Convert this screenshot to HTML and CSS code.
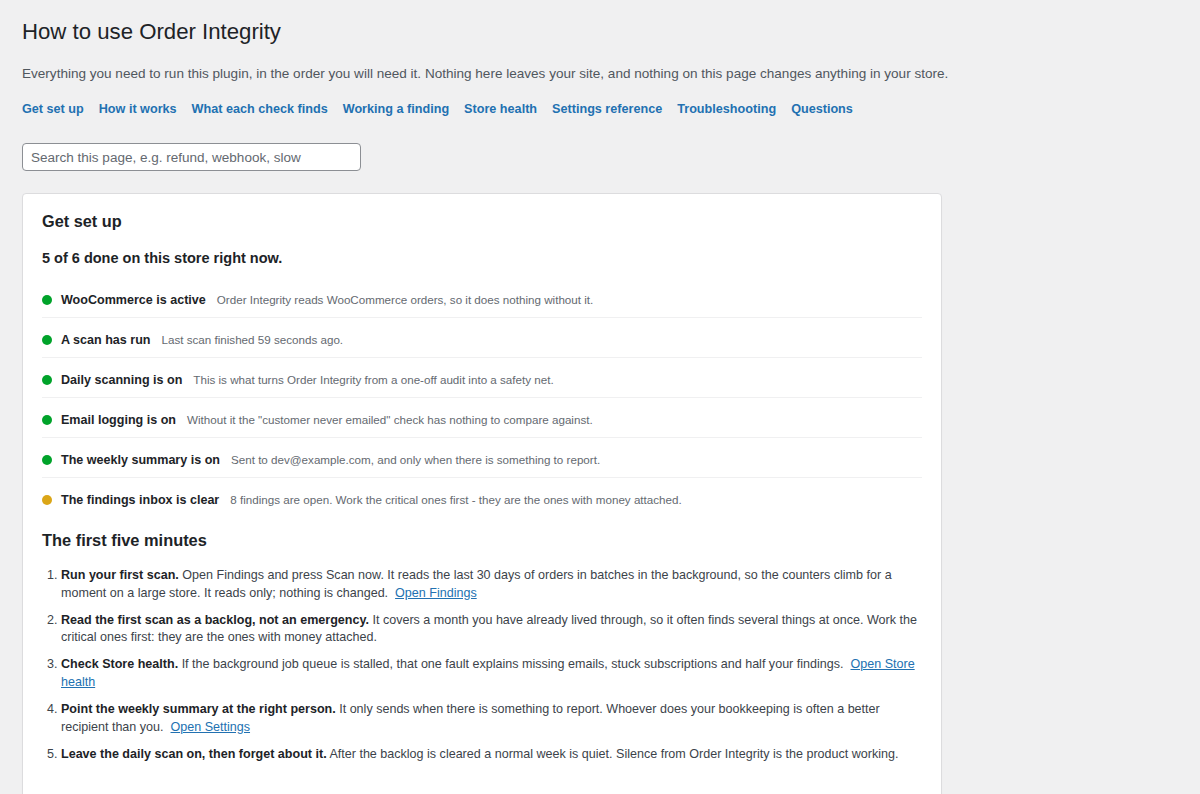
FILE: index.html
```html
<!DOCTYPE html>
<html lang="en">
<head>
<meta charset="utf-8">
<title>How to use Order Integrity</title>
<link rel="stylesheet" href="styles.css">
</head>
<body>
<div class="wrap">
  <h1 class="page-title">How to use Order Integrity</h1>
  <p class="intro">Everything you need to run this plugin, in the order you will need it. Nothing here leaves your site, and nothing on this page changes anything in your store.</p>
  <nav class="toc">
    <a href="#setup">Get set up</a>
    <a href="#how">How it works</a>
    <a href="#checks">What each check finds</a>
    <a href="#working">Working a finding</a>
    <a href="#health">Store health</a>
    <a href="#settings">Settings reference</a>
    <a href="#trouble">Troubleshooting</a>
    <a href="#questions">Questions</a>
  </nav>
  <input class="search" type="search" placeholder="Search this page, e.g. refund, webhook, slow">

  <section class="card" id="setup">
    <h2 class="card-title">Get set up</h2>
    <p class="progress">5 of 6 done on this store right now.</p>
    <ul class="checklist">
      <li class="check"><span class="dot ok"></span><strong>WooCommerce is active</strong><span class="desc">Order Integrity reads WooCommerce orders, so it does nothing without it.</span></li>
      <li class="check"><span class="dot ok"></span><strong>A scan has run</strong><span class="desc">Last scan finished 59 seconds ago.</span></li>
      <li class="check"><span class="dot ok"></span><strong>Daily scanning is on</strong><span class="desc">This is what turns Order Integrity from a one-off audit into a safety net.</span></li>
      <li class="check"><span class="dot ok"></span><strong>Email logging is on</strong><span class="desc">Without it the "customer never emailed" check has nothing to compare against.</span></li>
      <li class="check"><span class="dot ok"></span><strong>The weekly summary is on</strong><span class="desc">Sent to dev@example.com, and only when there is something to report.</span></li>
      <li class="check"><span class="dot warn"></span><strong>The findings inbox is clear</strong><span class="desc">8 findings are open. Work the critical ones first - they are the ones with money attached.</span></li>
    </ul>

    <h3 class="sub-title">The first five minutes</h3>
    <ol class="steps">
      <li><strong>Run your first scan.</strong> Open Findings and press Scan now. It reads the last 30 days of orders in batches in the background, so the counters climb for a moment on a large store. It reads only; nothing is changed. &nbsp;<a href="#">Open Findings</a></li>
      <li><strong>Read the first scan as a backlog, not an emergency.</strong> It covers a month you have already lived through, so it often finds several things at once. Work the critical ones first: they are the ones with money attached.</li>
      <li><strong>Check Store health.</strong> If the background job queue is stalled, that one fault explains missing emails, stuck subscriptions and half your findings. &nbsp;<a href="#">Open Store health</a></li>
      <li><strong>Point the weekly summary at the right person.</strong> It only sends when there is something to report. Whoever does your bookkeeping is often a better recipient than you. &nbsp;<a href="#">Open Settings</a></li>
      <li><strong>Leave the daily scan on, then forget about it.</strong> After the backlog is cleared a normal week is quiet. Silence from Order Integrity is the product working.</li>
    </ol>
  </section>
</div>
</body>
</html>
```
FILE: styles.css
```css
html, body {
  margin: 0;
  padding: 0;
}
body {
  background: #f0f0f1;
  color: #3c434a;
  font-family: "Liberation Sans", Arial, sans-serif;
  font-size: 12.56px;
  line-height: 1.4;
}
.wrap {
  padding: 17px 22px 0 22px;
}
.page-title {
  margin: 0;
  font-size: 22.2px;
  font-weight: 400;
  line-height: 30px;
  color: #1d2327;
}
.intro {
  margin: 17px 0 0;
  font-size: 13.56px;
  line-height: 20px;
  color: #50575e;
}
.toc {
  display: flex;
  flex-wrap: wrap;
  gap: 15px;
  margin-top: 15px;
  line-height: 20px;
  font-size: 12.63px;
}
.toc a {
  color: #2271b1;
  font-weight: 700;
  text-decoration: none;
}
.search {
  display: block;
  box-sizing: border-box;
  width: 339px;
  height: 28px;
  margin-top: 24px;
  padding: 0 8px;
  border: 1px solid #8c8f94;
  border-radius: 4px;
  background: #fff;
  font-family: inherit;
  font-size: 13.53px;
  color: #2c3338;
}
.search::placeholder {
  color: #646970;
}
.card {
  box-sizing: border-box;
  width: 920px;
  margin-top: 22px;
  padding: 15px 19px 40px;
  background: #fff;
  border: 1px solid #dcdcde;
  border-radius: 4px;
  box-shadow: 0 1px 1px rgba(0, 0, 0, 0.04);
}
.card-title {
  margin: 0;
  font-size: 16.3px;
  font-weight: 700;
  line-height: 24px;
  color: #1d2327;
}
.progress {
  margin: 14px 0 0;
  font-size: 14.5px;
  font-weight: 700;
  line-height: 22px;
  color: #1d2327;
}
.checklist {
  list-style: none;
  margin: 9px 0 0;
  padding: 0;
}
.check {
  display: flex;
  align-items: center;
  padding: 13px 0 8px;
  line-height: 18px;
  border-bottom: 1px solid #f0f0f1;
}
.check:last-child {
  border-bottom: 0;
}
.check strong {
  color: #1d2327;
  font-weight: 700;
  margin-right: 11px;
}
.dot {
  width: 10px;
  height: 10px;
  border-radius: 50%;
  flex: none;
  margin-right: 9px;
}
.dot.ok {
  background: #00a32a;
}
.dot.warn {
  background: #dba617;
}
.desc {
  font-size: 11.63px;
  color: #646970;
}
.sub-title {
  margin: 11px 0 0;
  font-size: 16.4px;
  font-weight: 700;
  line-height: 24px;
  color: #1d2327;
}
.steps {
  margin: 15px 0 0;
  padding-left: 19px;
}
.steps li {
  line-height: 17.7px;
  margin-bottom: 9.3px;
}
.steps strong {
  color: #1d2327;
}
.steps a {
  color: #2271b1;
  text-decoration: underline;
}
```
